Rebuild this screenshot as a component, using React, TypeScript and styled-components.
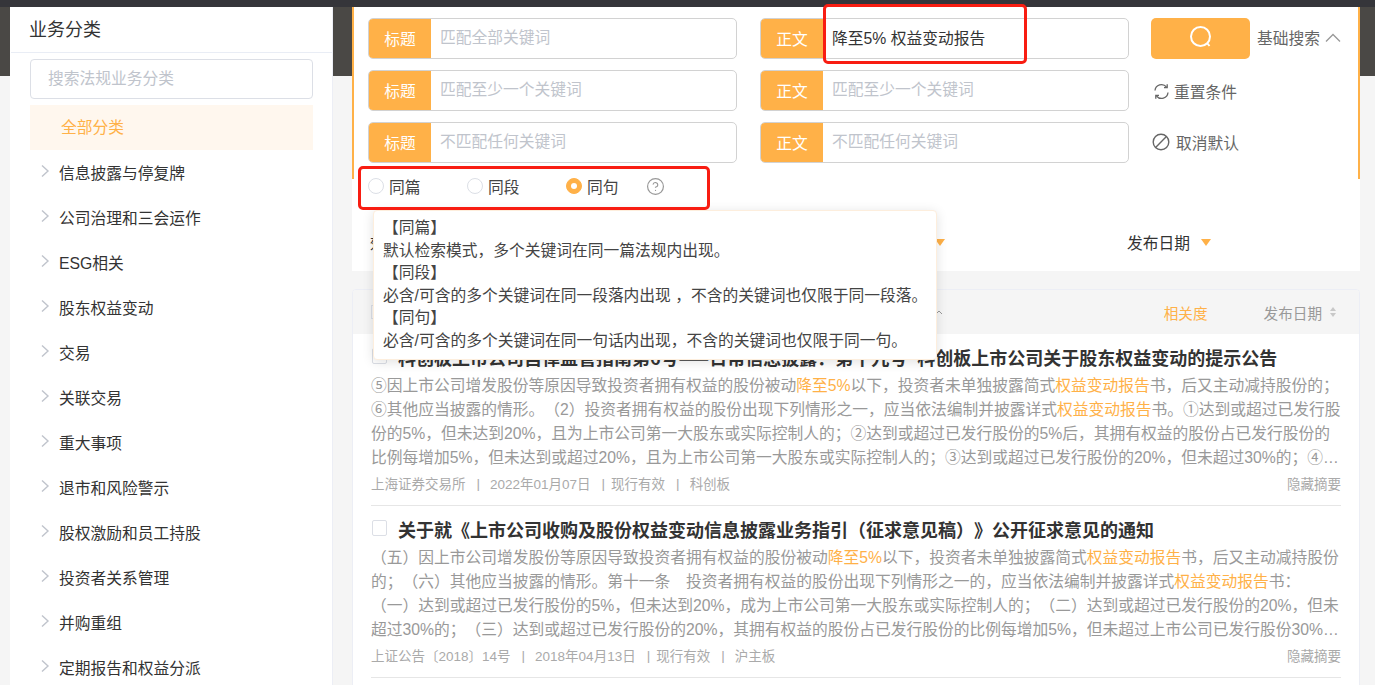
import React from "react";
import styled, { createGlobalStyle } from "styled-components";
import { CircleHelp } from "lucide-react";

const ORANGE = "#ffb148";

const Global = createGlobalStyle`
  html, body { margin: 0; padding: 0; height: 685px; overflow: hidden; }
  body {
    font-family: "Liberation Sans", "Noto Sans CJK SC", sans-serif;
    color: #333;
    text-spacing-trim: space-all;
    background: linear-gradient(#35353a 0, #35353a 7px, #4a4845 7px, #4a4845 76px, #f5f5f5 76px);
  }
  * { box-sizing: border-box; }
`;

const Page = styled.div`
  display: flex;
  height: 685px;
  padding: 7px 15px 0 10px;
  gap: 19px;
  overflow: hidden;
`;

const Sidebar = styled.aside`
  width: 323px;
  flex: none;
  background: #fff;
  border-right: 1px solid #eceef5;
  padding-left: 1px;
`;
const SideTitle = styled.div`
  height: 46px;
  padding: 0 0 4px 18px;
  display: flex;
  align-items: center;
  font-size: 18px;
  color: #333;
  border-bottom: 1px solid #e9edf5;
`;
const SideBody = styled.div`
  padding: 6px 19px 0 19px;
`;
const SideSearch = styled.div`
  height: 40px;
  border: 1px solid #dcdfe6;
  border-radius: 4px;
  padding: 0 0 3px 17px;
  display: flex;
  align-items: center;
  font-size: 15.75px;
  color: #c0c4cc;
`;
const AllRow = styled.div`
  height: 45px;
  margin-top: 6px;
  background: #fff7ee;
  color: ${ORANGE};
  font-size: 15.75px;
  display: flex;
  align-items: center;
  padding: 0 0 3px 31px;
`;
const TreeRow = styled.div`
  height: 45px;
  display: flex;
  align-items: center;
  font-size: 15.75px;
  color: #333;
  padding: 0 0 0 10px;
  gap: 9px;
`;

const Main = styled.main`
  position: relative;
  width: 1008px;
  flex: none;
`;
const FormPanel = styled.section`
  height: 264px;
  background: #fff;
`;
const SearchBox = styled.div`
  height: 172px;
  border-left: 2px solid ${ORANGE};
  border-right: 2px solid ${ORANGE};
  padding: 11px 0 0 14px;
  display: grid;
  grid-template-columns: 369px 369px 210px;
  grid-template-rows: 40.5px 40.5px 40.5px;
  column-gap: 23px;
  row-gap: 11.5px;
`;
const Field = styled.div`
  display: flex;
  border: 1px solid #d2d2d2;
  border-radius: 5px;
  overflow: hidden;
  background: #fff;
`;
const FieldLabel = styled.div`
  width: 63px;
  margin: -1px 0 -1px -1px;
  flex: none;
  background: ${ORANGE};
  color: #fff;
  font-size: 15.75px;
  display: flex;
  align-items: center;
  justify-content: center;
  padding-left: 1px;
`;
const FieldValue = styled.div<{ $filled?: boolean }>`
  flex: 1;
  display: flex;
  align-items: center;
  padding: 0 0 ${(p) => (p.$filled ? 1 : 3)}px 9px;
  font-size: 15.75px;
  color: ${(p) => (p.$filled ? "#333" : "#c0c4cc")};
`;
const ActionRow = styled.div`
  display: flex;
  align-items: center;
  margin-left: -1px;
`;
const SearchButton = styled.button`
  width: 99px;
  height: 40.5px;
  border: 0;
  border-radius: 5px;
  background: ${ORANGE};
  display: flex;
  align-items: center;
  justify-content: center;
  padding: 0 0 2px;
`;
const BasicLabel = styled.span`
  margin: 0 0 1px 7px;
  font-size: 15.75px;
  color: #666;
`;
const ActionText = styled.span<{ $gap: number; $top: number }>`
  margin: ${(p) => p.$top}px 0 0 ${(p) => p.$gap}px;
  font-size: 15.75px;
  color: #666;
`;

const RadioRow = styled.div`
  height: 20px;
  margin-top: -3px;
  padding-left: 16px;
  display: flex;
  align-items: center;
`;
const RadioItem = styled.label<{ $w: number }>`
  width: ${(p) => p.$w}px;
  display: flex;
  align-items: center;
  gap: 5px;
  font-size: 15.75px;
  color: #444;
`;
const RadioDot = styled.span<{ $on?: boolean }>`
  width: 16px;
  height: 16px;
  border-radius: 50%;
  flex: none;
  background: ${(p) => (p.$on ? ORANGE : "#fff")};
  border: 1px solid ${(p) => (p.$on ? ORANGE : "#dcdfe6")};
  display: flex;
  align-items: center;
  justify-content: center;
  &::after {
    content: "";
    width: 6px;
    height: 6px;
    border-radius: 50%;
    background: #fff;
    display: ${(p) => (p.$on ? "block" : "none")};
  }
`;
const HelpWrap = styled.span`
  display: flex;
  color: #999;
  margin: 1px 0 0 -2px;
`;

const FilterRow = styled.div`
  height: 52px;
  margin-top: 21px;
  padding-left: 18px;
  display: flex;
  align-items: center;
  font-size: 15.75px;
  color: #333;
`;
const FilterItem = styled.span<{ $w: number; $after?: number }>`
  width: ${(p) => p.$w}px;
  margin-right: ${(p) => p.$after || 0}px;
  display: flex;
  align-items: center;
  gap: 11px;
  flex: none;
  padding-bottom: 2px;
`;
const FilterName = styled.span`
  margin-right: auto;
`;
const Caret = styled.span`
  width: 0;
  height: 0;
  border-left: 5.5px solid transparent;
  border-right: 5.5px solid transparent;
  border-top: 7px solid ${ORANGE};
`;

const ResultCard = styled.section`
  margin-top: 18px;
  background: #fff;
  border: 1px solid #eceef5;
  border-radius: 4px 4px 0 0;
  height: 400px;
  overflow: hidden;
`;
const SortBar = styled.div`
  height: 44px;
  background: #f5f5f5;
  display: flex;
  align-items: center;
  padding: 0 23px 0 18px;
  font-size: 14.625px;
  color: #999;
`;
const SortCheck = styled.span`
  width: 14px;
  height: 14px;
  border: 1px solid #dcdfe6;
  margin-right: auto;
`;
const SortChevron = styled.span`
  margin-right: 221px;
  display: flex;
  color: #999;
`;
const SortActive = styled.span`
  color: ${ORANGE};
  margin-right: 56px;
`;
const SortArrows = styled.span`
  display: flex;
  flex-direction: column;
  gap: 2px;
  margin-left: 8px;
  &::before, &::after {
    content: "";
    width: 0;
    height: 0;
    border-left: 3px solid transparent;
    border-right: 3px solid transparent;
  }
  &::before { border-bottom: 4px solid #c8c8c8; }
  &::after { border-top: 4px solid #c8c8c8; }
`;

const ResultItem = styled.article`
  height: 172px;
  margin: 0 18px;
  padding-top: 10px;
  border-bottom: 1px solid #e6e6e6;
`;
const TitleRow = styled.div`
  height: 30px;
  display: flex;
  align-items: center;
  gap: 11px;
  padding: 0 0 5px 1px;
`;
const CheckBox = styled.span`
  width: 15px;
  height: 16px;
  flex: none;
  border: 1px solid #dcdfe6;
  border-radius: 2px;
  background: #fff;
  margin-top: -1px;
`;
const Title = styled.h3`
  margin: 0;
  font-family: "Noto Sans CJK SC", sans-serif;
  font-size: 18px;
  font-weight: 700;
  word-spacing: 6px;
  color: #333;
  white-space: nowrap;
`;
const Line = styled.div`
  height: 24px;
  line-height: 24px;
  font-size: 15.75px;
  color: #999;
  white-space: nowrap;
  overflow: hidden;
  text-overflow: ellipsis;
`;
const Hit = styled.span`
  color: ${ORANGE};
`;
const MetaRow = styled.div`
  height: 28px;
  padding-bottom: 2px;
  display: flex;
  align-items: center;
  justify-content: space-between;
  font-size: 13.5px;
  color: #aaa;
`;
const MetaLeft = styled.span`
  display: flex;
  align-items: center;
`;
const Sep = styled.span<{ $r?: number }>`
  margin: 0 ${(p) => p.$r ?? 10}px 0 11px;
  &::before { content: "|"; }
`;

const Tooltip = styled.div`
  position: absolute;
  left: 21px;
  top: 203px;
  width: 564px;
  height: 150px;
  background: #fff;
  border: 1px solid #fdeedd;
  border-radius: 4px;
  box-shadow: 0 2px 12px rgba(0, 0, 0, 0.12);
  padding: 6px 0 0 9px;
  font-size: 15.75px;
  line-height: 22.5px;
  color: #444;
  white-space: nowrap;
  z-index: 3;
`;
const RedMark = styled.div<{ $l: number; $t: number; $w: number; $h: number }>`
  position: absolute;
  left: ${(p) => p.$l}px;
  top: ${(p) => p.$t}px;
  width: ${(p) => p.$w}px;
  height: ${(p) => p.$h}px;
  border: 3px solid #f81d12;
  border-radius: 5px;
  z-index: 4;
`;

const tree = ["信息披露与停复牌", "公司治理和三会运作", "ESG相关", "股东权益变动", "交易", "关联交易", "重大事项", "退市和风险警示", "股权激励和员工持股", "投资者关系管理", "并购重组", "定期报告和权益分派"];

const Chevron = () => (
  <svg width="10" height="14" viewBox="0 0 10 14" style={{ marginTop: -4 }}>
    <path d="M2 1.5 8 7 2 12.5" fill="none" stroke="#c0c4cc" strokeWidth="1.4" />
  </svg>
);

export default function App() {
  return (
    <>
      <Global />
      <Page>
        <Sidebar>
          <SideTitle>业务分类</SideTitle>
          <SideBody>
            <SideSearch>搜索法规业务分类</SideSearch>
            <AllRow>全部分类</AllRow>
            {tree.map((t) => (
              <TreeRow key={t}><Chevron />{t}</TreeRow>
            ))}
          </SideBody>
        </Sidebar>
        <Main>
          <FormPanel>
            <SearchBox>
              <Field><FieldLabel>标题</FieldLabel><FieldValue>匹配全部关键词</FieldValue></Field>
              <Field><FieldLabel>正文</FieldLabel><FieldValue $filled>降至5% 权益变动报告</FieldValue></Field>
              <ActionRow>
                <SearchButton aria-label="搜索">
                  <svg width="26" height="26" viewBox="0 0 26 26" fill="none" stroke="#fff" strokeWidth="2">
                    <circle cx="12.5" cy="12.5" r="9.5" />
                    <path d="M19.5 19.5 21.5 22" />
                  </svg>
                </SearchButton>
                <BasicLabel>基础搜索</BasicLabel>
                <svg width="16" height="10" viewBox="0 0 16 10" fill="none" stroke="#999" strokeWidth="1.3" style={{ marginLeft: 5 }}>
                  <path d="M1 8.5 8 1.5 15 8.5" />
                </svg>
              </ActionRow>
              <Field><FieldLabel>标题</FieldLabel><FieldValue>匹配至少一个关键词</FieldValue></Field>
              <Field><FieldLabel>正文</FieldLabel><FieldValue>匹配至少一个关键词</FieldValue></Field>
              <ActionRow>
                <svg width="17" height="17" viewBox="0 0 17 17" fill="none" stroke="#666" strokeWidth="1.3" style={{ marginLeft: 2, marginTop: 2 }}>
                  <path d="M2 7.5A6.5 6.5 0 0 1 13.5 4" />
                  <path d="M14.2 1.3V4.6H11" />
                  <path d="M15 9.5A6.5 6.5 0 0 1 3.5 13" />
                  <path d="M2.8 15.7V12.4H6" />
                </svg>
                <ActionText $gap={4} $top={2}>重置条件</ActionText>
              </ActionRow>
              <Field><FieldLabel>标题</FieldLabel><FieldValue>不匹配任何关键词</FieldValue></Field>
              <Field><FieldLabel>正文</FieldLabel><FieldValue>不匹配任何关键词</FieldValue></Field>
              <ActionRow>
                <svg width="18" height="18" viewBox="0 0 18 18" fill="none" stroke="#666" strokeWidth="1.4" style={{ marginLeft: 1 }}>
                  <circle cx="9" cy="9" r="7.8" />
                  <path d="M3.6 14.4 14.4 3.6" />
                </svg>
                <ActionText $gap={6} $top={0}>取消默认</ActionText>
              </ActionRow>
            </SearchBox>
            <RadioRow>
              <RadioItem $w={99}><RadioDot />同篇</RadioItem>
              <RadioItem $w={99}><RadioDot />同段</RadioItem>
              <RadioItem $w={82}><RadioDot $on />同句</RadioItem>
              <HelpWrap><CircleHelp size={19} strokeWidth={1.5} /></HelpWrap>
            </RadioRow>
            <FilterRow>
              <FilterItem $w={575} $after={182}>
                <FilterName>效力层级</FilterName>
                <Caret />
              </FilterItem>
              <FilterItem $w={100}>发布日期<Caret /></FilterItem>
            </FilterRow>
          </FormPanel>
          <ResultCard>
            <SortBar>
              <SortCheck />
              <SortChevron>
                <svg width="8" height="6" viewBox="0 0 8 6" fill="none" stroke="#999" strokeWidth="1"><path d="M1 5 4 2 7 5" /></svg>
              </SortChevron>
              <SortActive>相关度</SortActive>
              <span>发布日期</span>
              <SortArrows />
            </SortBar>
            <ResultItem>
              <TitleRow>
                <CheckBox />
                <Title>科创板上市公司自律监管指南第6号——日常信息披露：第十九号 科创板上市公司关于股东权益变动的提示公告</Title>
              </TitleRow>
              <Line>⑤因上市公司增发股份等原因导致投资者拥有权益的股份被动<Hit>降至5%</Hit>以下，投资者未单独披露简式<Hit>权益变动报告</Hit>书，后又主动减持股份的；</Line>
              <Line>⑥其他应当披露的情形。（2）投资者拥有权益的股份出现下列情形之一，应当依法编制并披露详式<Hit>权益变动报告</Hit>书。①达到或超过已发行股</Line>
              <Line>份的5%，但未达到20%，且为上市公司第一大股东或实际控制人的；②达到或超过已发行股份的5%后，其拥有权益的股份占已发行股份的</Line>
              <Line>比例每增加5%，但未达到或超过20%，且为上市公司第一大股东或实际控制人的；③达到或超过已发行股份的20%，但未超过30%的；④达到或超过已发行股份的30%</Line>
              <MetaRow>
                <MetaLeft>上海证券交易所<Sep />2022年01月07日<Sep $r={6} />现行有效<Sep />科创板</MetaLeft>
                <span>隐藏摘要</span>
              </MetaRow>
            </ResultItem>
            <ResultItem>
              <TitleRow>
                <CheckBox />
                <Title>关于就《上市公司收购及股份权益变动信息披露业务指引（征求意见稿）》公开征求意见的通知</Title>
              </TitleRow>
              <Line>（五）因上市公司增发股份等原因导致投资者拥有权益的股份被动<Hit>降至5%</Hit>以下，投资者未单独披露简式<Hit>权益变动报告</Hit>书，后又主动减持股份</Line>
              <Line>的；（六）其他应当披露的情形。第十一条　投资者拥有权益的股份出现下列情形之一的，应当依法编制并披露详式<Hit>权益变动报告</Hit>书：</Line>
              <Line>（一）达到或超过已发行股份的5%，但未达到20%，成为上市公司第一大股东或实际控制人的；（二）达到或超过已发行股份的20%，但未</Line>
              <Line>超过30%的；（三）达到或超过已发行股份的20%，其拥有权益的股份占已发行股份的比例每增加5%，但未超过上市公司已发行股份30%的部分</Line>
              <MetaRow>
                <MetaLeft>上证公告〔2018〕14号<Sep />2018年04月13日<Sep $r={6} />现行有效<Sep />沪主板</MetaLeft>
                <span>隐藏摘要</span>
              </MetaRow>
            </ResultItem>
          </ResultCard>
          <Tooltip>
            【同篇】<br />
            默认检索模式，多个关键词在同一篇法规内出现。<br />
            【同段】<br />
            必含/可含的多个关键词在同一段落内出现 ，不含的关键词也仅限于同一段落。<br />
            【同句】<br />
            必含/可含的多个关键词在同一句话内出现，不含的关键词也仅限于同一句。
          </Tooltip>
          <RedMark $l={6} $t={159} $w={352} $h={44} />
          <RedMark $l={471} $t={-3} $w={204} $h={60} />
        </Main>
      </Page>
    </>
  );
}
